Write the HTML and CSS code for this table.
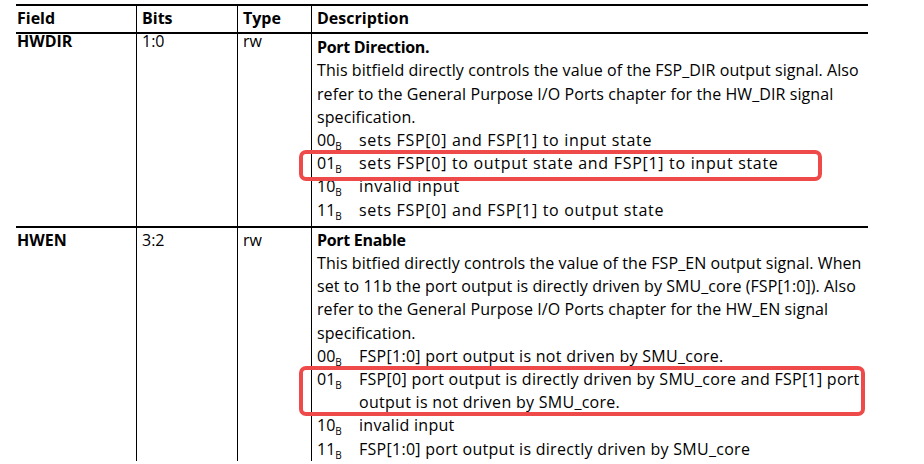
FILE: index.html
```html
<!DOCTYPE html>
<html>
<head>
<meta charset="utf-8">
<link rel="stylesheet" href="styles.css">
</head>
<body>
<div class="regtable">
  <div class="cell head first">Field</div>
  <div class="cell head">Bits</div>
  <div class="cell head">Type</div>
  <div class="cell head desc">Description</div>

  <div class="cell row1 first hi"><b>HWDIR</b></div>
  <div class="cell row1 hi">1:0</div>
  <div class="cell row1 hi">rw</div>
  <div class="cell row1 desc">
    <div class="title">Port Direction.</div>
    <div class="para">This bitfield directly controls the value of the FSP_DIR output signal. Also<br>refer to the General Purpose I/O Ports chapter for the HW_DIR signal<br>specification.</div>
    <div class="codes codes-wide">
      <div class="code">00<span class="sub">B</span></div><div class="txt">sets FSP[0] and FSP[1] to input state</div>
      <div class="code mark mark1">01<span class="sub">B</span></div><div class="txt">sets FSP[0] to output state and FSP[1] to input state</div>
      <div class="code">10<span class="sub">B</span></div><div class="txt">invalid input</div>
      <div class="code">11<span class="sub">B</span></div><div class="txt">sets FSP[0] and FSP[1] to output state</div>
    </div>
  </div>

  <div class="cell row2 first"><b>HWEN</b></div>
  <div class="cell row2">3:2</div>
  <div class="cell row2">rw</div>
  <div class="cell row2 desc">
    <div class="title">Port Enable</div>
    <div class="para">This bitfied directly controls the value of the FSP_EN output signal. When<br>set to 11b the port output is directly driven by SMU_core (FSP[1:0]). Also<br>refer to the General Purpose I/O Ports chapter for the HW_EN signal<br>specification.</div>
    <div class="codes codes-mid">
      <div class="code">00<span class="sub">B</span></div><div class="txt">FSP[1:0] port output is not driven by SMU_core.</div>
      <div class="code mark mark2">01<span class="sub">B</span></div><div class="txt">FSP[0] port output is directly driven by SMU_core and FSP[1] port<br>output is not driven by SMU_core.</div>
      <div class="code">10<span class="sub">B</span></div><div class="txt">invalid input</div>
      <div class="code">11<span class="sub">B</span></div><div class="txt">FSP[1:0] port output is directly driven by SMU_core</div>
    </div>
  </div>
</div>
</body>
</html>
```

FILE: styles.css
```css
html, body {
  margin: 0;
  padding: 0;
  background: #ffffff;
}

body {
  font-family: "Open Sans", "Liberation Sans", sans-serif;
  font-size: 16px;
  color: #000;
}

.regtable {
  margin: 4px 0 0 16px;
  width: 852px;
  display: grid;
  grid-template-columns: 120px 101px 74px 557px;
  border-top: 2px solid #000;
}

.cell {
  border-left: 1px solid #000;
  padding: 0 4px 0 5px;
  line-height: 23.2px;
  white-space: nowrap;
}

.cell.first {
  border-left: none;
  padding-left: 1px;
}

.head {
  font-weight: 700;
  padding-top: 1px;
  padding-bottom: 2px;
  border-bottom: 2px solid #000;
}

.row1 {
  border-bottom: 2px solid #000;
  padding-top: 2px;
  padding-bottom: 4px;
}

.row1.hi {
  line-height: 14px;
  padding-top: 0;
}

.row2 {
  padding-top: 1px;
}

.title {
  font-weight: 700;
  letter-spacing: -0.3px;
}

.para {
  letter-spacing: 0.08px;
}

.codes {
  display: grid;
  grid-template-columns: 42px auto;
}

.codes-wide .txt {
  letter-spacing: 0.7px;
}

.codes-mid .txt {
  letter-spacing: 0.28px;
}

.sub {
  font-size: 10px;
  vertical-align: -4px;
  line-height: 0;
}

.mark {
  position: relative;
}

.mark::after {
  content: "";
  position: absolute;
  border: 4px solid #ef4a4a;
  border-radius: 7px;
  pointer-events: none;
}

.mark1::after {
  left: -18px;
  top: -2px;
  width: 515px;
  height: 23px;
}

.mark2::after {
  left: -18px;
  top: -2px;
  width: 558px;
  height: 42px;
}
```
